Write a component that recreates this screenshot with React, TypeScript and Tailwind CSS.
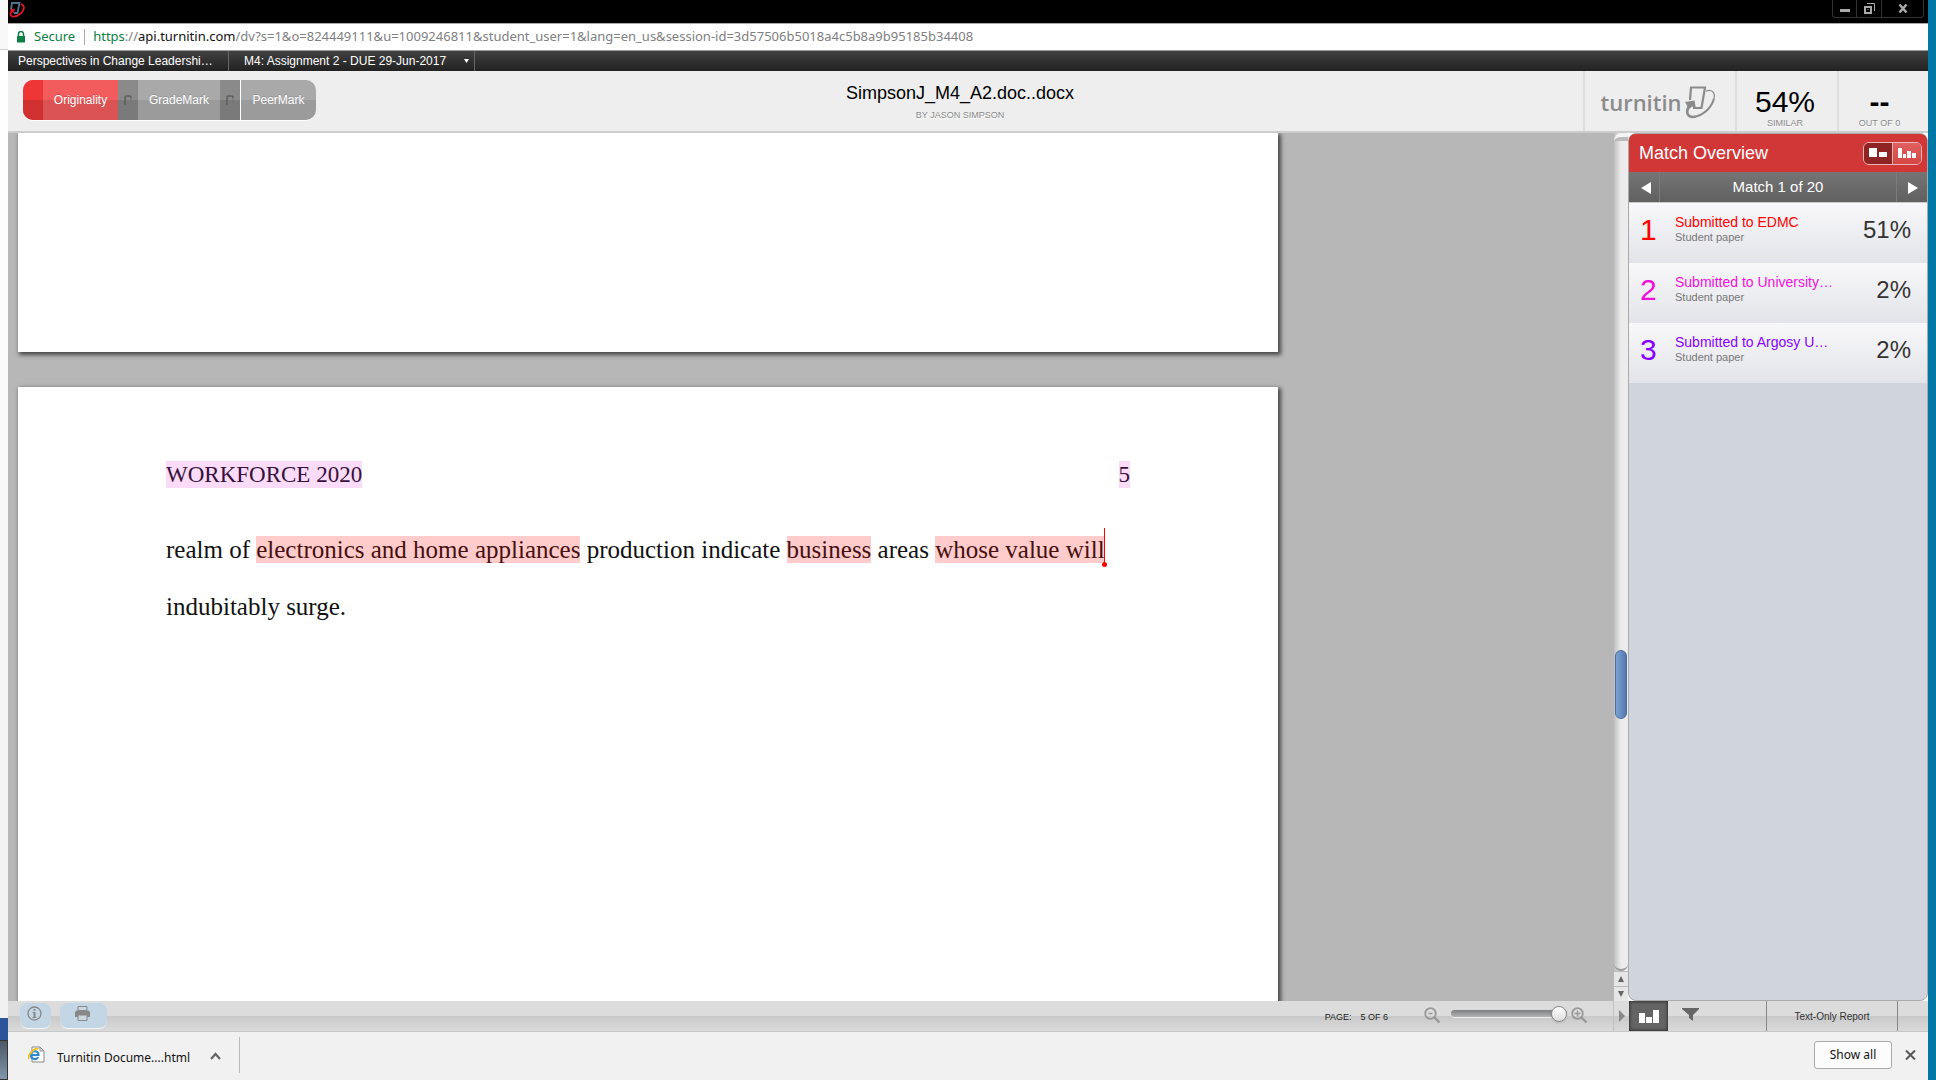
import { useState } from "react";
import clsx from "clsx";

interface MatchRecord {
  rank: number;
  source: string;
  kind: string;
  percent: string;
  color: string;
}

const matches: MatchRecord[] = [
  { rank: 1, source: "Submitted to EDMC", kind: "Student paper", percent: "51%", color: "text-[#ff0000]" },
  { rank: 2, source: "Submitted to University…", kind: "Student paper", percent: "2%", color: "text-[#ee11dd]" },
  { rank: 3, source: "Submitted to Argosy U…", kind: "Student paper", percent: "2%", color: "text-[#8800ff]" },
];

const barGradient = "bg-linear-to-b from-[#dcdcdc] from-50% via-[#c9c9c9] via-50% to-[#dadada]";

function TitleBar() {
  return (
    <div className="flex h-6 shrink-0 justify-between border-b border-[#a8a8a8] bg-black">
      <svg width="17" height="18" viewBox="0 0 17 18" fill="none" className="shrink-0">
        <path d="M3 9.500L4 3h7.500l-2 10H6" stroke="#54738c" strokeWidth="1.800" />
        <path d="M13 4c4 1.500 4 6-1 10s-10 3-9.500-.5 2-3.500 4-4" stroke="#e0152b" strokeWidth="1.800" />
        <path d="M1.500 9.500l5-.5-.5 4.500z" fill="#e0152b" />
      </svg>
      <div className="mr-1 flex h-[18px] rounded-b border border-t-0 border-[#333]">
        <button aria-label="Minimize" className="flex w-6 items-center justify-center border-r border-[#333]">
          <svg width="10" height="10" viewBox="0 0 10 10"><path d="M0 5h10v3H0z" fill="#aaa" /></svg>
        </button>
        <button aria-label="Restore" className="flex w-[25px] items-center justify-center border-r border-[#333]">
          <svg width="11" height="11" viewBox="0 0 11 11" fill="none" stroke="#aaa">
            <path d="M1 4h6v6H1z" strokeWidth="2" />
            <path d="M3 .5h7.500V8" />
            <path d="M3.500 6.500h1" />
          </svg>
        </button>
        <button aria-label="Close" className="flex w-[41px] items-center justify-center">
          <svg width="10" height="9" viewBox="0 0 10 9"><path d="M1.500 .5l7 8M8.500 .5l-7 8" stroke="#aaa" strokeWidth="2.400" /></svg>
        </button>
      </div>
    </div>
  );
}

function AddressBar() {
  return (
    <div className="flex h-[27px] shrink-0 items-center border-b border-[#999] bg-white pl-[9px] font-['Noto_Sans','Open_Sans',sans-serif] text-[13px]">
      <svg width="8" height="12" viewBox="0 0 8 12">
        <path d="M0 5h8v6.500H0z" fill="#0b8043" />
        <path d="M1.500 5V3a2.500 2.500 0 015 0v2" fill="none" stroke="#0b8043" strokeWidth="1.500" />
      </svg>
      <span className="ml-[9px] text-[#0b8043]">Secure</span>
      <span className="mr-2 ml-[9px] h-4 w-px bg-[#aaa]" />
      <span className="whitespace-nowrap text-[#808080]">
        <span className="text-[#0b8043]">https</span>://<span className="text-[#111]">api.turnitin.com</span>
        /dv?s=1&amp;o=824449111&amp;u=1009246811&amp;student_user=1&amp;lang=en_us&amp;session-id=3d57506b5018a4c5b8a9b95185b34408
      </span>
    </div>
  );
}

function CourseNav() {
  return (
    <nav className="flex h-5 shrink-0 bg-linear-to-b from-[#414141] to-[#222] text-xs leading-5 text-white">
      <a href="#course" className="w-[221px] border-r border-[#666] pl-[10px]">Perspectives in Change Leadershi…</a>
      <button className="flex w-[246px] items-center justify-between border-r border-[#666] pr-[5px] pl-[15px]">
        M4: Assignment 2 - DUE 29-Jun-2017
        <svg width="5" height="4" viewBox="0 0 5 4"><path d="M0 0h5L2.500 4z" fill="#fff" /></svg>
      </button>
    </nav>
  );
}

function TabGap() {
  return (
    <span className="flex w-5 items-center justify-center bg-linear-to-b from-[#8a8a8a] from-50% to-[#7a7a7a] to-50%">
      <svg width="8" height="10" viewBox="0 0 8 10" fill="none">
        <path d="M1 10V2.500Q1 1 2.500 1h3Q7 1 7 3" stroke="#5f5f5f" strokeWidth="1.600" />
        <path d="M7 3v5" stroke="#777" />
      </svg>
    </span>
  );
}

function ModeTabs() {
  const tabText = "text-xs text-white [text-shadow:0_-1px_0_rgba(0,0,0,0.15)]";
  return (
    <div className="flex h-10 overflow-hidden rounded-[10px] shadow-[0_1px_0_#fff]">
      <button className={clsx(tabText, "flex bg-linear-to-b from-[#f35c5c] from-50% to-[#da5252] to-50%")}>
        <span className="h-full w-5 bg-linear-to-b from-[#ef3636] from-50% to-[#d13030] to-50%" />
        <span className="w-[75px] self-center text-center">Originality</span>
      </button>
      <TabGap />
      <button className={clsx(tabText, "w-[82px] bg-linear-to-b from-[#a9a9a9] from-50% to-[#9b9b9b] to-50%")}>GradeMark</button>
      <TabGap />
      <button className={clsx(tabText, "w-[76px] border-l border-white bg-linear-to-b from-[#a9a9a9] from-50% to-[#9b9b9b] to-50%")}>PeerMark</button>
    </div>
  );
}

function TurnitinLogo() {
  return (
    <div className="flex items-center pr-1 text-[#8b8b8b]">
      <span className="font-['Open_Sans',sans-serif] text-[22px] leading-8 font-semibold">turnitin</span>
      <svg width="32" height="34" viewBox="0 0 32 34" fill="none" stroke="currentColor" className="ml-0.5">
        <path d="M6 15L7 2.500h14L17.500 23H9" strokeWidth="2.200" />
        <path d="M22 6c6-2 9.500 1.500 8 7.500" strokeWidth="1.200" />
        <path d="M30 13.500C28 22 20 29.500 12 31.500" strokeWidth="2" />
        <path d="M12 31.500C4 33.500 1 28 5 21" strokeWidth="2.600" />
        <path d="M1 17l9.500-1.500L12 24l-4-2.500-3 2.500z" fill="currentColor" stroke="none" />
      </svg>
    </div>
  );
}

function Header() {
  const cell = "flex flex-col items-center border-l-2 border-[#ddd]";
  const caption = "text-[9px] leading-3 text-[#888] [text-shadow:0_1px_0_#fff]";
  return (
    <header className="grid h-[62px] shrink-0 grid-cols-[1fr_auto_1fr] border-b-2 border-[#ccc] bg-[#eee]">
      <div className="flex items-start pt-[9px] pl-[15px]">
        <ModeTabs />
      </div>
      <div className="flex flex-col items-center pt-[11px] pr-4">
        <h1 className="text-lg leading-[22px] text-black">SimpsonJ_M4_A2.doc..docx</h1>
        <p className={clsx(caption, "pt-[5px]")}>BY JASON SIMPSON</p>
      </div>
      <div className="flex justify-end">
        <div className={clsx(cell, "w-[152px] pt-[14px]")}>
          <TurnitinLogo />
        </div>
        <div className={clsx(cell, "w-[102px] pt-[15px] pr-1")}>
          <span className="text-[30px] leading-[31px] text-black">54%</span>
          <span className={caption}>SIMILAR</span>
        </div>
        <div className={clsx(cell, "w-[91px] pt-[15px] pr-2")}>
          <span className="text-[30px] leading-[31px] font-bold text-black">--</span>
          <span className={caption}>OUT OF 0</span>
        </div>
      </div>
    </header>
  );
}

function DocumentView() {
  const page = "w-[1260px] bg-white shadow-[2px_2px_4px_1px_rgba(0,0,0,0.600)]";
  const pink = "bg-[#fadcf8] text-[#36123a]";
  const red = "bg-[#ffcbcb] text-[#451010]";
  return (
    <main className="flex min-w-0 flex-1 flex-col gap-[35px] overflow-hidden bg-[#b7b7b7] pl-[10px] font-['Liberation_Serif',serif]">
      <section className={clsx(page, "h-[219px] shrink-0")} />
      <section className={clsx(page, "flex-1 px-[148px] pt-[74px]")}>
        <div className="flex justify-between text-[23px] leading-[27px]">
          <mark className={pink}>WORKFORCE 2020</mark>
          <mark className={pink}>5</mark>
        </div>
        <p className="pt-[33px] text-[25px] leading-[57px] text-[#111]">
          realm of <mark className={red}>electronics and home appliances</mark> production indicate{" "}
          <mark className={red}>business</mark> areas{" "}
          <mark className={clsx(red, "relative")}>
            whose value will
            <span className="absolute right-0 -bottom-px h-9 w-px bg-[#f00]" />
            <span className="absolute -right-0.5 -bottom-1 size-[5px] rounded-full bg-[#f00]" />
          </mark>
          <br />
          indubitably surge.
        </p>
      </section>
    </main>
  );
}

function ScrollTrack() {
  const step = "flex h-[15px] items-center justify-center border-t border-[#bbb] bg-[#e6e6e6]";
  return (
    <div className="flex w-[14px] shrink-0 flex-col bg-linear-to-r from-[#c0c0c0] to-[#ececec] to-50%">
      <div className="h-2 rounded-tl-lg border-t-4 border-[#f4f4f4] bg-[#bbb]" />
      <div className="flex-[509]" />
      <div className="mx-px h-[69px] rounded-md border border-[#4c6c9c] bg-linear-to-r from-[#7ba3d6] to-[#5578ad]" />
      <div className="flex-[244]" />
      <div className="h-2 rounded-b-lg border-b-2 border-[#999]" />
      <button aria-label="Scroll up" className={step}>
        <svg width="6" height="6" viewBox="0 0 6 6"><path d="M0 6h6L3 0z" fill="#666" /></svg>
      </button>
      <button aria-label="Scroll down" className={step}>
        <svg width="6" height="6" viewBox="0 0 6 6"><path d="M0 0h6L3 6z" fill="#666" /></svg>
      </button>
    </div>
  );
}

function MatchPanel() {
  const [current, setCurrent] = useState(1);
  return (
    <aside className="flex w-[300px] shrink-0 flex-col rounded-lg border border-[#aaa] bg-[#d0d5dd]">
      <div className="flex h-[38px] shrink-0 items-center justify-between rounded-t-md bg-[#d23737] pr-[5px] pl-[10px]">
        <h2 className="text-lg text-white">Match Overview</h2>
        <div className="flex h-[23px] overflow-hidden rounded-md border border-[#e9b5b5]">
          <button aria-label="Match overview" className="flex w-[29px] items-center justify-center border-r border-[#e9b5b5] bg-[#8f2424]">
            <svg width="18" height="10" viewBox="0 0 18 10" fill="#fff"><path d="M0 0h8v9H0zM10 4h8v5h-8z" /></svg>
          </button>
          <button aria-label="All sources" className="flex w-7 items-center justify-center bg-linear-to-b from-[#e06060] to-[#d64545]">
            <svg width="18" height="10" viewBox="0 0 18 10" fill="#fff"><path d="M0 0h4v10H0zM5 6h3v4H5zM9 3h4v7H9zM14 5h4v5h-4z" /></svg>
          </button>
        </div>
      </div>
      <div className="flex h-[31px] shrink-0 border-b border-[#ccc] bg-linear-to-b from-[#757575] to-[#606060] text-[15px] text-white">
        <button aria-label="Previous match" onClick={() => setCurrent(Math.max(1, current - 1))} className="flex w-[31px] items-center justify-center border-r border-[#7c7c7c] pt-0.5 pl-1">
          <svg width="10" height="12" viewBox="0 0 10 12"><path d="M10 0v12L0 6z" fill="#fff" /></svg>
        </button>
        <span className="flex-1 self-center text-center">Match {current} of 20</span>
        <button aria-label="Next match" onClick={() => setCurrent(Math.min(20, current + 1))} className="flex w-[31px] items-center justify-center border-l border-[#7c7c7c] pt-0.5 pl-0.5">
          <svg width="10" height="12" viewBox="0 0 10 12"><path d="M0 0v12l10-6z" fill="#fff" /></svg>
        </button>
      </div>
      <ul>
        {matches.map((m) => (
          <li key={m.rank} className="flex h-[60px] bg-linear-to-b from-[#f8f8fa] to-[#e3e4e9] pt-[11px] pr-4 pl-[11px]">
            <span className={clsx("w-[35px] text-[30px] leading-8", m.color)}>{m.rank}</span>
            <div className="flex-1">
              <a href="#source" className={clsx("block text-sm leading-4", m.color)}>{m.source}</a>
              <p className="text-[11px] leading-[14px] text-[#777]">{m.kind}</p>
            </div>
            <span className="text-2xl leading-8 text-[#333]">{m.percent}</span>
          </li>
        ))}
      </ul>
    </aside>
  );
}

function Magnifier({ plus }: { plus?: boolean }) {
  return (
    <svg width="17" height="17" viewBox="0 0 17 17" fill="none" stroke="#999">
      <circle cx="6.500" cy="6.500" r="5.300" strokeWidth="1.800" />
      <path d="M10.500 10.500l5 5" strokeWidth="2.400" />
      <path d={plus ? "M3.500 6.500h6M6.500 3.500v6" : "M4.500 6.500h4"} strokeWidth="1.400" />
    </svg>
  );
}

function Toolbar() {
  const [zoom, setZoom] = useState(100);
  const pill = "flex h-[26px] justify-center rounded-lg border-b border-white/80 bg-[#c3d6e6]";
  return (
    <div className={clsx("flex h-[31px] shrink-0 border-b border-[#c8c8c8]", barGradient)}>
      <div className="flex flex-1 items-start pt-0.5 pl-3">
        <button aria-label="Document info" className={clsx(pill, "w-[31px] pt-[3px] pr-0.5")}>
          <svg width="16" height="16" viewBox="0 0 16 16" fill="none" stroke="#888">
            <circle cx="7.500" cy="7.500" r="6.500" strokeWidth="1.300" />
            <path d="M7.500 6v5.500M7.500 3v1.800" strokeWidth="2" />
            <path d="M5.500 6.500h2M5.500 11.500h4" />
          </svg>
        </button>
        <button aria-label="Print" className={clsx(pill, "ml-[9px] w-[47px] pt-0.5 pr-[3px]")}>
          <svg width="15" height="17" viewBox="0 0 15 17">
            <path d="M3 1.500h9v4H3z" fill="#ccd6de" stroke="#888" />
            <path d="M1.500 5.500h12L15 7v5H0V7z" fill="#888" />
            <path d="M3 10h9v5.500H3z" fill="#ccd6de" stroke="#888" />
          </svg>
        </button>
        <p className="ml-auto pt-2 pr-9 text-[9px] leading-3 text-[#222]">
          PAGE:<span className="pl-[9px]">5 OF 6</span>
        </p>
        <button aria-label="Zoom out" className="pt-1"><Magnifier /></button>
        <input
          type="range"
          aria-label="Zoom"
          value={zoom}
          onChange={(e) => setZoom(Number(e.target.value))}
          className="mt-[7px] ml-[10px] h-[7px] w-[116px] appearance-none rounded-full bg-linear-to-b from-[#7c7e80] to-[#b4b5b7] shadow-[0_1px_0_#eee] [&::-webkit-slider-thumb]:size-4 [&::-webkit-slider-thumb]:appearance-none [&::-webkit-slider-thumb]:rounded-full [&::-webkit-slider-thumb]:border [&::-webkit-slider-thumb]:border-[#888] [&::-webkit-slider-thumb]:bg-linear-to-b [&::-webkit-slider-thumb]:from-white [&::-webkit-slider-thumb]:to-[#ddd] [&::-webkit-slider-thumb]:shadow"
        />
        <button aria-label="Zoom in" className="pt-1 pr-[25px] pl-1"><Magnifier plus /></button>
      </div>
      <button aria-label="Collapse panel" className="flex w-4 items-center justify-center border-l border-[#c0c0c0]">
        <svg width="6" height="12" viewBox="0 0 6 12"><path d="M0 0v12l6-6z" fill="#888" /></svg>
      </button>
      <div className="flex w-[299px] text-[10px] text-[#333]">
        <button aria-label="Statistics" className="flex w-[39px] items-center justify-center bg-[#646464] shadow-[inset_0_0_3px_1px_#333]">
          <svg width="20" height="13" viewBox="0 0 20 13" fill="#fff"><path d="M0 3h6v10H0zM7 7h6v6H7zM14 0h6v13h-6z" /></svg>
        </button>
        <button aria-label="Filter" className="pb-1 pl-[14px]">
          <svg width="17" height="13" viewBox="0 0 17 13"><path d="M0 0h17v1l-6 6v6l-4-3V7L0 1z" fill="#666" /></svg>
        </button>
        <button className="ml-auto w-[132px] border-x border-[#888]">Text-Only Report</button>
        <span className="w-[30px]" />
      </div>
    </div>
  );
}

function DownloadBar() {
  return (
    <footer className="flex h-12 shrink-0 items-center justify-between bg-[#f1f1f1] pr-3 pb-0.5 pl-5 font-['Noto_Sans','Open_Sans',sans-serif] text-xs text-[#111]">
      <div className="flex items-center">
        <svg width="17" height="18" viewBox="0 0 17 18" fill="none">
          <path d="M4 1h8l4 4v11H4z" fill="#fff" stroke="#888" />
          <path d="M12 1v4h4" stroke="#888" />
          <path d="M3 9h7.500c0-5-7.500-5-7.500 0s6 5 7 2" stroke="#2a8ad4" strokeWidth="2.200" />
          <path d="M1 13C-1 9 7 1 10.500 3" stroke="#f0c020" strokeWidth="1.800" />
        </svg>
        <a href="#download" className="pt-1.5 pl-3">Turnitin Docume....html</a>
        <button aria-label="Download options" className="pt-0.5 pl-5">
          <svg width="11" height="8" viewBox="0 0 11 8"><path d="M1 7l4.500-5L10 7" fill="none" stroke="#666" strokeWidth="2.200" /></svg>
        </button>
        <span className="ml-[18px] h-9 w-px bg-[#bbb]" />
      </div>
      <div className="flex items-center gap-[13px]">
        <button className="h-7 w-[78px] rounded-[3px] border border-[#aaa] bg-[#fcfcfc]">Show all</button>
        <button aria-label="Close downloads">
          <svg width="11" height="10" viewBox="0 0 11 10"><path d="M1 .5l9 9M10 .5l-9 9" stroke="#555" strokeWidth="2" /></svg>
        </button>
      </div>
    </footer>
  );
}

export default function App() {
  return (
    <div className="flex h-screen overflow-hidden font-['Liberation_Sans',Arial,sans-serif]">
      <div className="flex w-2 shrink-0 flex-col bg-[#f8f8f8]">
        <div className="h-[50px] border-b border-[#d0d0d0]" />
        <div className="flex-1 bg-linear-to-b from-white to-[#f0f0f0]" />
        <div className="h-[22px] bg-[#2a5699]" />
        <div className="h-10 border border-l-0 border-[#333] bg-linear-to-b from-[#4b5866] to-[#8296ab]" />
      </div>
      <div className="flex min-w-0 flex-1 flex-col">
        <TitleBar />
        <AddressBar />
        <CourseNav />
        <Header />
        <div className="flex min-h-0 flex-1">
          <DocumentView />
          <ScrollTrack />
          <MatchPanel />
        </div>
        <Toolbar />
        <DownloadBar />
      </div>
      <div className="w-2 shrink-0 bg-[#0078a6]" />
    </div>
  );
}
